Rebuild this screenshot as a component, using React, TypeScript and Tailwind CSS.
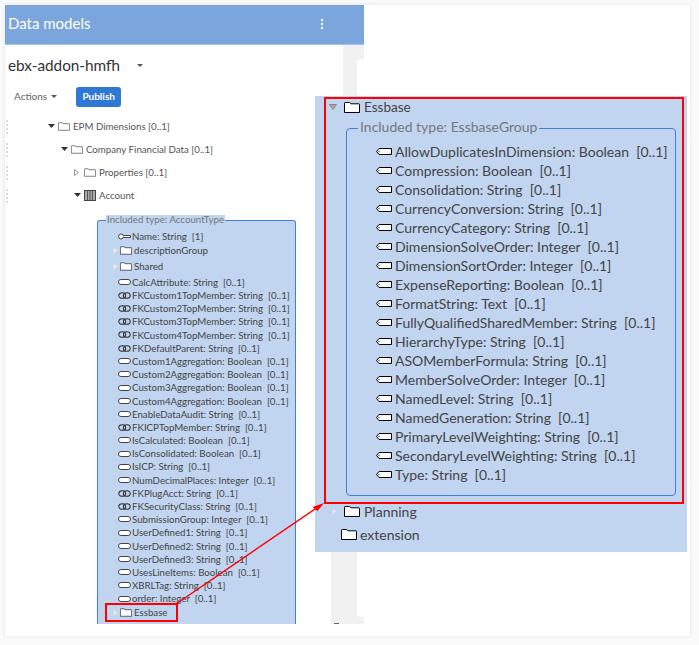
import React from "react";

const Folder = ({ w = 16, h = 11, color = "#000", fill = "#fff" }: { w?: number; h?: number; color?: string; fill?: string }) => (
  <svg width={w} height={h} viewBox="0 0 16 11" className="shrink-0">
    <path d="M0.5 10.5V1.2Q0.5 .5 1.2 .5H5.5Q6.3 .5 6.8 1.8H15Q15.5 1.8 15.5 2.5V10.5Z" fill={fill} stroke={color} strokeWidth="1" />
  </svg>
);

const Field = ({ big = false }: { big?: boolean }) =>
  big ? (
    <svg width="16" height="7" viewBox="0 0 16 7" className="shrink-0">
      <path d="M3 .5H15.5V6.5H3L.5 3.5Z" fill="#fff" stroke="#000" />
      <circle cx="3" cy="3.5" r="0.8" fill="#555" />
    </svg>
  ) : (
    <svg width="13" height="6" viewBox="0 0 13 6" className="shrink-0">
      <rect x=".5" y=".5" width="12" height="5" rx="2.5" fill="#fff" stroke="#444" />
    </svg>
  );

const Link = () => (
  <svg width="13" height="7" viewBox="0 0 13 7" className="shrink-0">
    <ellipse cx="4.2" cy="3.5" rx="3.4" ry="2.8" fill="none" stroke="#333" strokeWidth="1.1" />
    <ellipse cx="8.8" cy="3.5" rx="3.4" ry="2.8" fill="none" stroke="#333" strokeWidth="1.1" />
  </svg>
);

const Key = () => (
  <svg width="13" height="7" viewBox="0 0 13 7" className="shrink-0">
    <circle cx="3" cy="3.5" r="2.5" fill="#fff" stroke="#444" />
    <path d="M5.5 2.5H12.5V4.5H5.5" fill="#fff" stroke="#444" />
  </svg>
);

type Kind = "f" | "l";
const leftRows: [Kind, string, string][] = [
  ["f", "CalcAttribute: String", "[0..1]"],
  ["l", "FKCustom1TopMember: String", "[0..1]"],
  ["l", "FKCustom2TopMember: String", "[0..1]"],
  ["l", "FKCustom3TopMember: String", "[0..1]"],
  ["l", "FKCustom4TopMember: String", "[0..1]"],
  ["l", "FKDefaultParent: String", "[0..1]"],
  ["f", "Custom1Aggregation: Boolean", "[0..1]"],
  ["f", "Custom2Aggregation: Boolean", "[0..1]"],
  ["f", "Custom3Aggregation: Boolean", "[0..1]"],
  ["f", "Custom4Aggregation: Boolean", "[0..1]"],
  ["f", "EnableDataAudit: String", "[0..1]"],
  ["l", "FKICPTopMember: String", "[0..1]"],
  ["f", "IsCalculated: Boolean", "[0..1]"],
  ["f", "IsConsolidated: Boolean", "[0..1]"],
  ["f", "IsICP: String", "[0..1]"],
  ["f", "NumDecimalPlaces: Integer", "[0..1]"],
  ["l", "FKPlugAcct: String", "[0..1]"],
  ["l", "FKSecurityClass: String", "[0..1]"],
  ["f", "SubmissionGroup: Integer", "[0..1]"],
  ["f", "UserDefined1: String", "[0..1]"],
  ["f", "UserDefined2: String", "[0..1]"],
  ["f", "UserDefined3: String", "[0..1]"],
  ["f", "UsesLineItems: Boolean", "[0..1]"],
  ["f", "XBRLTag: String", "[0..1]"],
  ["f", "order: Integer", "[0..1]"],
];

const rightRows = [
  "AllowDuplicatesInDimension: Boolean",
  "Compression: Boolean",
  "Consolidation: String",
  "CurrencyConversion: String",
  "CurrencyCategory: String",
  "DimensionSolveOrder: Integer",
  "DimensionSortOrder: Integer",
  "ExpenseReporting: Boolean",
  "FormatString: Text",
  "FullyQualifiedSharedMember: String",
  "HierarchyType: String",
  "ASOMemberFormula: String",
  "MemberSolveOrder: Integer",
  "NamedLevel: String",
  "NamedGeneration: String",
  "PrimaryLevelWeighting: String",
  "SecondaryLevelWeighting: String",
  "Type: String",
];

const Open = () => (
  <svg width="7" height="4" viewBox="0 0 7 4" className="shrink-0"><path d="M0 0H7L3.5 4Z" fill="#333" /></svg>
);
const Closed = () => (
  <svg width="5" height="7" viewBox="0 0 5 7" className="shrink-0"><path d="M.5 .5L4.5 3.5L.5 6.5Z" fill="#fff" stroke="#999" /></svg>
);
const Faint = () => (
  <svg width="5" height="7" viewBox="0 0 5 7" className="shrink-0"><path d="M.5 .5L4.5 3.5L.5 6.5Z" fill="#e6ebf2" stroke="#d3dbe6" /></svg>
);

const Dots = () => (
  <div className="flex flex-col gap-[2px] w-[3px] shrink-0">
    <span className="w-[2px] h-[2px] bg-[#dcdcdc]" />
    <span className="w-[2px] h-[2px] bg-[#dcdcdc]" />
    <span className="w-[2px] h-[2px] bg-[#dcdcdc]" />
    <span className="w-[2px] h-[2px] bg-[#dcdcdc]" />
  </div>
);

const TreeRow = ({ pad, open, table, label }: { pad: string; open: boolean; table?: boolean; label: string }) => (
  <div className="flex items-center h-[23px] pl-[1px] text-[9.7px] text-[#555] whitespace-nowrap">
    <Dots />
    <div className={`flex items-center ${pad}`}>
      <span className="w-[10px] flex justify-start">{open ? <Open /> : <Closed />}</span>
      {table ? (
        <svg width="12" height="11" viewBox="0 0 12 11" className="shrink-0 mr-[3px]">
          <rect x=".5" y=".5" width="11" height="10" fill="#aaa" stroke="#444" />
          <path d="M3.5 1V10M6 1V10M8.5 1V10" stroke="#555" />
        </svg>
      ) : (
        <span className="mr-[3px] flex"><Folder w={12} h={9} color="#555" /></span>
      )}
      <span>{label}</span>
    </div>
  </div>
);

const SmallGroup = ({ label, cls }: { label: string; cls: string }) => (
  <div className={`pl-[15px] flex items-center h-[13px] ${cls}`}>
    <Faint />
    <span className="ml-[2px] flex"><Folder w={12} h={9} color="#333" /></span>
    <span className="ml-[2px]">{label}</span>
  </div>
);

export default function App() {
  return (
    <div className="relative w-[699px] h-[645px] bg-[#fafafa] overflow-hidden font-['Lato','Noto_Sans',sans-serif]">
      <div className="ml-[5px] mt-[5px] w-[685px] h-[631px] bg-white shadow-[0_0_4px_rgba(0,0,0,0.1)]">
        <div className="w-[359px] h-[619px] flex flex-col">
          <div className="h-[40px] shrink-0 bg-[#7ba6dd] border-b border-[#a6c3e9] flex items-center justify-between pl-[3px] pr-[40px] pb-[2px] text-white">
            <span className="text-[15px]">Data models</span>
            <svg width="4" height="12" viewBox="0 0 4 12"><circle cx="2" cy="2" r="1.2" fill="#fff" /><circle cx="2" cy="6" r="1.2" fill="#fff" /><circle cx="2" cy="10" r="1.2" fill="#fff" /></svg>
          </div>
          <div className="flex-1 flex min-h-0">
            <div className="flex-1 min-w-0 pt-[12px]">
              <div className="flex items-center pl-[3px] h-[17px] text-[15.3px] text-[#333]">
                ebx-addon-hmfh
                <svg width="6" height="3" viewBox="0 0 6 3" className="ml-[17px]"><path d="M0 0H6L3 3Z" fill="#555" /></svg>
              </div>
              <div className="flex items-center mt-[12px] pl-[9px] h-[21px] text-[10px] text-[#666]">
                Actions
                <svg width="6" height="3" viewBox="0 0 6 3" className="ml-[4px]"><path d="M0 0H6L3 3Z" fill="#555" /></svg>
                <span className="ml-[19px] w-[45px] h-[20px] bg-[#2f78d4] rounded-[3px] text-white text-[10px] font-bold flex items-center justify-center">Publish</span>
              </div>
              <div className="mt-[8px]">
                <TreeRow pad="pl-[39px]" open label="EPM Dimensions [0..1]" />
                <TreeRow pad="pl-[52px]" open label="Company Financial Data [0..1]" />
                <TreeRow pad="pl-[65px]" open={false} label="Properties [0..1]" />
                <TreeRow pad="pl-[65px]" open table label="Account" />
              </div>
            </div>
            <div className="w-[21px] shrink-0 bg-[#f1f1f1] pl-[14px] pt-[14px]">
              <div className="h-[558px] bg-white rounded-l-[4px]" />
            </div>
          </div>
        </div>
      </div>

      {/* lower part of the gray strip, below the callout */}
      <div className="absolute left-[331px] top-[552px] w-[12px] h-[72px] bg-[#f1f1f1]">
        <div className="absolute left-[3px] bottom-0 w-[5px] h-[1px] bg-[#666]" />
      </div>

      {/* included type box over the left tree */}
      <div className="absolute left-[97px] top-[220px] w-[199px] h-[404px] bg-[#c1d5f0] border-x border-t border-[#3f80d8] rounded-t-[3px] text-[9.7px] text-[#444]">
        <div className="absolute -top-[6px] left-[8px] bg-[#c1d5f0] h-[10px] px-[1px] flex items-center text-[#777] leading-none whitespace-nowrap">Included type: AccountType</div>
        <div className="pl-[20px] mt-[9px] h-[13px] flex items-center"><Key /><span className="ml-[1px]">Name: String&nbsp; [1]</span></div>
        <SmallGroup label="descriptionGroup" cls="mt-[0.5px]" />
        <SmallGroup label="Shared" cls="mt-[3px]" />
        <div className="mt-[3px]">
          {leftRows.map(([k, t, c]) => (
            <div key={t} className="pl-[20px] flex items-center h-[13.2px] whitespace-nowrap">
              {k === "l" ? <Link /> : <Field />}
              <span className="ml-[1px]">{t}&nbsp; {c}</span>
            </div>
          ))}
        </div>
        <SmallGroup label="Essbase" cls="mt-[0.5px]" />
      </div>

      {/* highlight on Essbase */}
      <div className="absolute left-[105px] top-[603px] w-[73px] h-[19px] border-2 border-[#ff0000]" />

      {/* enlarged callout */}
      <div className="absolute left-[315px] top-[96px] w-[372px] h-[456px] bg-[#c1d5f0] text-[14px] text-[#444]">
        <div className="flex items-center pl-[14px] h-[22px]">
          <svg width="8" height="6" viewBox="0 0 8 6" className="shrink-0"><path d="M.5 .5H7.5L4 5.5Z" fill="#aaa" stroke="#888" /></svg>
          <span className="ml-[7px] flex"><Folder /></span>
          <span className="ml-[4px] text-[13.5px]">Essbase</span>
        </div>
        <div className="relative ml-[31px] mt-[10px] w-[330px] h-[368px] border border-[#3f80d8] rounded-[4px] pt-[13px]">
          <div className="absolute -top-[10px] left-[11px] bg-[#c1d5f0] px-[2px] text-[14px] leading-[16px] text-[#777] whitespace-nowrap">Included type: EssbaseGroup</div>
          {rightRows.map((t) => (
            <div key={t} className="pl-[29px] flex items-center h-[19px] whitespace-nowrap">
              <Field big />
              <span className="ml-[3px]">{t}&nbsp; [0..1]</span>
            </div>
          ))}
        </div>
        <div className="flex items-center pl-[17px] mt-[4px] h-[23px]">
          <Faint />
          <span className="ml-[7px] flex"><Folder /></span>
          <span className="ml-[4px]">Planning</span>
        </div>
        <div className="flex items-center pl-[26px] h-[23px]">
          <Folder />
          <span className="ml-[3px]">extension</span>
        </div>
      </div>

      {/* red box and arrow */}
      <div className="absolute left-[324px] top-[97px] w-[360px] h-[407px] border-[2px] border-[#ff0000]" />
      <svg className="absolute left-0 top-0 pointer-events-none" width="699" height="645" viewBox="0 0 699 645">
        <path d="M176 604L318 507" stroke="#ff0000" strokeWidth="1.4" fill="none" />
        <path d="M324 503L312.5 507L317.5 511Z" fill="#ff0000" />
      </svg>
    </div>
  );
}
